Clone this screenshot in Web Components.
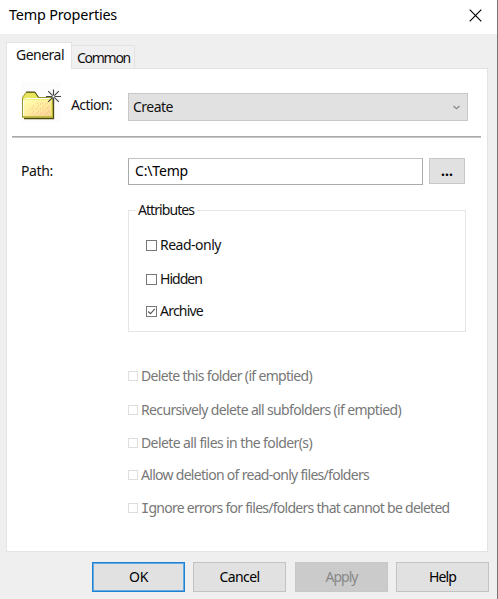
<!DOCTYPE html>
<html lang="en">
<head>
<meta charset="utf-8">
<title>Temp Properties</title>
<style>
html,body{margin:0;height:100%;overflow:hidden;background:#efefef}
body{font:14px/18px "Noto Sans","Open Sans",sans-serif;color:#111}
</style>
</head>
<body>
<properties-dialog></properties-dialog>
<script>
const define = (name, html, setup) => {
  const t = document.createElement('template');
  t.innerHTML = html;
  customElements.define(name, class extends HTMLElement {
    connectedCallback() {
      if (this.shadowRoot) return;
      this.attachShadow({mode: 'open'}).append(t.content.cloneNode(true));
      if (setup) setup(this, this.shadowRoot);
    }
  });
};

// Text label whose letter spacing is tuned to fill the width given in "w".
define('ui-text', `<style>
:host{display:block;height:18px;white-space:pre;flex:none}
span{display:inline-block;white-space:pre}
:host([serif]) span::first-letter{font-family:"DejaVu Sans Mono",monospace;font-size:13.5px}
</style><span><slot></slot></span>`, (el, root) => {
  const w = +el.getAttribute('w'), s = root.querySelector('span');
  if (!w) return;
  const n = el.textContent.length;
  el.style.width = w + 'px';
  s.style.letterSpacing = ((w - s.getBoundingClientRect().width) / n).toFixed(3) + 'px';
});

define('title-bar', `<style>
:host{display:flex;box-sizing:border-box;height:34px;background:#fff;padding:6px 15px 0 9px;justify-content:space-between;align-items:flex-start;font-size:14.4px;color:#000}
svg{display:block;margin-top:3px}
</style><slot></slot><svg width="13" height="13" viewBox="0 0 13 13"><path d="M.7.7 12.3 12.3M12.3.7.7 12.3" stroke="#000" stroke-width="1.15" fill="none"/></svg>`);

define('tab-item', `<style>
:host{display:block;box-sizing:border-box;height:23px;width:63px;border:1px solid #e3e3e3;border-left:0;border-bottom:0;padding:3px 0 0 5px;background:#f0f0f0}
:host([selected]){height:27px;width:66px;background:#fff;border-left:1px solid #e3e3e3;padding:3px 0 0 9px;margin-bottom:-1px;position:relative}
</style><slot></slot>`);

define('tab-strip', `<style>
:host{display:flex;align-items:flex-end;height:26px;padding:8px 0 0 6px}
</style><slot></slot>`);

define('tab-panel', `<style>
:host{display:block;box-sizing:border-box;width:482px;height:484px;margin-left:6px;border:1px solid #e3e3e3;background:#fff}
</style><slot></slot>`);

define('folder-icon', `<style>:host{display:block;width:40px;height:40px;background:#fcfcfc}svg{display:block}</style>
<svg width="40" height="40" viewBox="0 0 40 40">
<defs><linearGradient id="g" x2="1" y2="1"><stop stop-color="#ffffb0"/><stop offset=".55" stop-color="#ffee9c"/><stop offset="1" stop-color="#fbd193"/></linearGradient>
<pattern id="d" width="5" height="5" patternUnits="userSpaceOnUse"><path d="M1 1h1M4 2h1M2 4h1" stroke="#ffb5a0" stroke-width="1"/></pattern></defs>
<path d="M3 36.5H32.5V17" fill="none" stroke="#4c4911" stroke-width="1.3"/>
<path d="M1.5 35V15.5L5 10.5H14L17.5 15.5H31.5V35Z" fill="#e8e45c" stroke="#979534"/>
<path d="M5 10H14L17.5 15.5" fill="none" stroke="#4c4911"/>
<path d="M2 17.5H30V34H2Z" fill="url(#g)"/><path d="M8 23H16V20H29V34H7Z" fill="url(#d)"/>
<path d="M2.5 34V18.5L4.5 16.5H30" stroke="#fffff0" fill="none"/>
<path d="M1.5 35.5H31.5V17" stroke="#b5af3c" fill="none"/>
<path d="M32.5 7.5V22M25 14.5H40M27.2 9.2 37.8 19.8M37.8 9.2 27.2 19.8" stroke="#444" stroke-width="1.15" fill="none"/>
<path d="M31.5 13.5h2v2h-2z" fill="#fff"/>
</svg>`);

define('select-box', `<style>
:host{display:flex;box-sizing:border-box;width:340px;height:28px;border:1px solid #c7c7c7;background:#e1e1e1;padding:4px 7px 0 4px;justify-content:space-between}
svg{margin-top:7px}
</style><slot></slot><svg width="7" height="5" viewBox="0 0 7 5"><path d="M.5 1 3.5 3.8 6.5 1" fill="none" stroke="#888" stroke-width="1.2"/></svg>`);

define('text-field', `<style>
:host{display:block;box-sizing:border-box;width:295px;height:27px;border:1px solid #aaa;border-top-color:#c3c3c3;background:#fff;padding:3px 0 0 6px;color:#000}
</style><slot></slot>`);

define('push-button', `<style>
:host{display:flex;box-sizing:border-box;width:93px;height:30px;border:1px solid #c3c3c3;background:#e1e1e1;justify-content:center;padding-top:5px;color:#000}
:host([default]){border:1px solid #1b82d6;box-shadow:inset 0 0 0 1px #69a9df}
:host([disabled]){background:#cbcbcb;border-color:#c7c7c7;color:#888}
:host([small]){width:36px;height:26px;border-color:#c7c7c7;padding-top:3px}
</style><slot></slot>`);

define('check-box', `<style>
:host{display:flex;height:18px;gap:3px;color:#111}
i{display:block;box-sizing:border-box;width:11px;height:11px;border:1px solid #777;margin-top:4px;background:#fff}
svg{display:none}
:host([checked]) svg{display:block}
:host([disabled]){color:#777}
:host([disabled]) i{width:10px;height:10px;border-color:#dedede}
</style><i><svg width="9" height="9" viewBox="0 0 9 9"><path d="M1.2 4.5 3.5 6.7 7.8 1.9" fill="none" stroke="#555" stroke-width="1.1"/></svg></i><slot></slot>`);

define('group-box', `<style>
:host{display:block;box-sizing:border-box;width:338px;height:122px;border:1px solid #e5e5e5;padding:0 0 0 17px}
.cap{display:block;width:61px;height:18px;background:#fff;margin:-10px 0 0 -10px;padding-left:2px;box-sizing:border-box}
.list{display:grid;grid-template-rows:34px 32px 18px;padding-top:17px}
</style><div class="cap"><slot name="caption"></slot></div><div class="list"><slot></slot></div>`);

define('properties-dialog', `<style>
:host{display:block;box-sizing:border-box;width:498px;height:599px;background:#efefef;border-right:1px solid #757575}
.action{display:grid;grid-template-columns:50px 57px 340px;padding:13px 0 0 14px;height:41px}
.action ui-text{margin-top:14px}
.action select-box{margin-top:11px}
.action select-box ui-text{margin:0}
hr{border:0;height:2px;background:linear-gradient(#aaa 50%,#c7c7c7 50%);width:469px;margin:13px 0 20px 5px}
.path{display:grid;grid-template-columns:107px 295px 42px;padding-left:14px;height:27px}
.path>ui-text{margin-top:4px}
push-button[small]{margin-left:6px}
group-box{margin:25px 0 0 121px}
.delete{display:grid;grid-template-rows:34px 33px 32px 33px 18px;margin:35px 0 0 121px}
.buttons{display:grid;grid-template-columns:101px 102px 101px 93px;padding:10px 0 0 92px}
</style>
<title-bar><ui-text w="108">Temp Properties</ui-text></title-bar>
<tab-strip><tab-item selected><ui-text w="48">General</ui-text></tab-item><tab-item><ui-text w="53">Common</ui-text></tab-item></tab-strip>
<tab-panel>
<div class="action"><folder-icon></folder-icon><ui-text w="41">Action:</ui-text><select-box><ui-text w="40">Create</ui-text></select-box></div>
<hr>
<div class="path"><ui-text w="32">Path:</ui-text><text-field><ui-text w="53">C:\\Temp</ui-text></text-field><push-button small><ui-text w="12"><b>...</b></ui-text></push-button></div>
<group-box><ui-text slot="caption" w="56">Attributes</ui-text>
<check-box><ui-text w="61">Read-only</ui-text></check-box>
<check-box><ui-text w="42">Hidden</ui-text></check-box>
<check-box checked><ui-text w="43">Archive</ui-text></check-box></group-box>
<div class="delete">
<check-box disabled><ui-text w="171">Delete this folder (if emptied)</ui-text></check-box>
<check-box disabled><ui-text w="260">Recursively delete all subfolders (if emptied)</ui-text></check-box>
<check-box disabled><ui-text w="171">Delete all files in the folder(s)</ui-text></check-box>
<check-box disabled><ui-text w="228">Allow deletion of read-only files/folders</ui-text></check-box>
<check-box disabled><ui-text w="308.5" serif>Ignore errors for files/folders that cannot be deleted</ui-text></check-box>
</div>
</tab-panel>
<div class="buttons"><push-button default><ui-text w="19">OK</ui-text></push-button><push-button><ui-text w="40">Cancel</ui-text></push-button><push-button disabled><ui-text w="32">Apply</ui-text></push-button><push-button><ui-text w="27">Help</ui-text></push-button></div>`);
</script>
</body>
</html>
